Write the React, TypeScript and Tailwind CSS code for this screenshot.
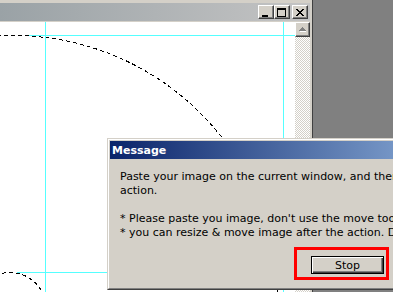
import React from "react";

function CapBtn({ children }: { children: React.ReactNode }) {
  return (
    <div className="w-[16px] h-[14px] bg-[#d4d0c8] border-t border-l border-t-white border-l-white border-b border-r border-b-[#404040] border-r-[#404040] shadow-[inset_-1px_-1px_#808080] relative">
      {children}
    </div>
  );
}

export default function App() {
  return (
    <div className="relative w-[393px] h-[292px] overflow-hidden bg-[#808080] flex font-['DejaVu_Sans',sans-serif]">
      {/* main window */}
      <div className="w-[313px] h-full flex flex-col bg-[#d4d0c8] pt-[3px] pr-[2px] border-r border-r-[#404040]">
        <div className="h-[18px] flex items-center justify-end pr-[2px] bg-[linear-gradient(to_right,#9aa2a6,#c4c4c4)]">
          <CapBtn>
            <svg width="14" height="12" className="absolute left-0 top-0" shapeRendering="crispEdges">
              <rect x="3" y="9" width="6" height="2" fill="#000" />
            </svg>
          </CapBtn>
          <CapBtn>
            <svg width="14" height="12" className="absolute left-0 top-0" shapeRendering="crispEdges">
              <rect x="2.5" y="2.5" width="8" height="8" fill="none" stroke="#000" />
              <rect x="2" y="3" width="9" height="1" fill="#000" />
            </svg>
          </CapBtn>
          <div className="w-[2px]" />
          <CapBtn>
            <svg width="14" height="12" className="absolute left-0 top-0" shapeRendering="crispEdges">
              <path d="M3 3h2v1h1v1h2v-1h1v-1h2v1h-1v1h-1v1h-1v1h1v1h1v1h1v1h-2v-1h-1v-1h-2v1h-1v1h-2v-1h1v-1h1v-1h1v-1h-1v-1h-1v-1h-1z" fill="#000" />
            </svg>
          </CapBtn>
        </div>
        <div className="h-[1px]" />
        <div className="flex-1 flex min-h-0">
          <div className="w-[295px] relative bg-white overflow-hidden">
            <svg width="295" height="270" className="absolute left-0 top-0" shapeRendering="crispEdges">
              <line x1="25" y1="13.5" x2="295" y2="13.5" stroke="#55ffff" />
              <line x1="45.5" y1="0" x2="45.5" y2="270" stroke="#55ffff" />
              <line x1="283.5" y1="0" x2="283.5" y2="270" stroke="#55ffff" />
              <line x1="17" y1="250.5" x2="295" y2="250.5" stroke="#55ffff" />
              <circle cx="13" cy="278.5" r="265" fill="none" stroke="#000" strokeDasharray="4 3" />
              <circle cx="10" cy="286.5" r="36" fill="none" stroke="#000" strokeDasharray="4 3" />
            </svg>
          </div>
          <div className="w-[15px] flex flex-col bg-[image:repeating-conic-gradient(#d4d0c8_0_25%,#ffffff_0_50%)] bg-size-[2px_2px]">
            <div className="h-[15px] bg-[#d4d0c8] border-t border-l border-t-white border-l-white border-b border-r border-b-[#404040] border-r-[#404040] shadow-[inset_-1px_-1px_#808080] flex items-center justify-center">
              <svg width="7" height="5" shapeRendering="crispEdges">
                <path d="M3 0h1v1h1v1h1v1h1v1h-7v-1h1v-1h1v-1h1z" fill="#808080" />
                <rect x="1" y="4" width="7" height="1" fill="#ffffff" />
              </svg>
            </div>
          </div>
        </div>
      </div>

      {/* dialog */}
      <div className="absolute left-[107px] top-[138px] w-[421px] h-[152px] border border-t-[#d4d0c8] border-l-[#d4d0c8] border-b-[#404040] border-r-[#404040]">
        <div className="w-full h-full border border-t-white border-l-white border-b-[#808080] border-r-[#808080] bg-[#d4d0c8] p-[1px] flex flex-col">
          <div className="h-[18px] flex items-center pl-[2px] bg-[linear-gradient(to_right,#0a246a,#a6caf0)]">
            <span className="text-white font-bold text-[11px] leading-none">Message</span>
          </div>
          <div className="pt-[11px] pl-[10px] text-[11px] leading-[14px] text-black whitespace-nowrap">
            <div>Paste your image on the current window, and then press Stop after the</div>
            <div>action.</div>
            <div className="h-[14px]" />
            <div>* Please paste you image, don't use the move tool.</div>
            <div>* you can resize &amp; move image after the action. Don't move the window.</div>
          </div>
          <div className="pt-[7px] pl-[184px] flex">
            <div className="border-[3px] border-[#ff0000] pt-[6px] pb-[3px] pl-[14px] pr-[2px]">
              <div className="w-[73px] h-[18px] border border-black bg-[#d4d0c8] shadow-[inset_1px_1px_#ffffff,inset_-1px_-1px_#404040,inset_-2px_-2px_#808080] flex items-center justify-center text-[11px] leading-none text-black">
                Stop
              </div>
            </div>
          </div>
        </div>
      </div>
    </div>
  );
}
